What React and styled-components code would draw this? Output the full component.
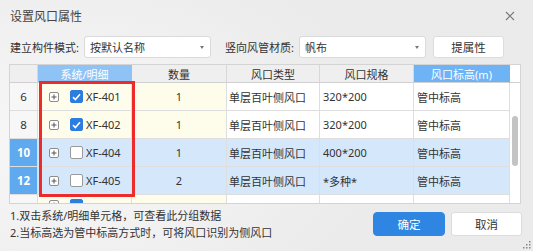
import React from 'react'
import styled, {createGlobalStyle} from 'styled-components'

const GlobalStyle = createGlobalStyle`
    body {
        margin: 0;
        background: #ececec;
        font-family: "Noto Sans", "Noto Sans CJK SC", sans-serif;
    }
`

const Dialog = styled.div`
    position: relative;
    width: 533px;
    height: 251px;
    display: flex;
    flex-direction: column;
    background: radial-gradient(ellipse 420px 260px at 12% 55%, #f8f8f8 0%, #ebebeb 75%);
    color: #333;
    font-size: 11px;
    overflow: hidden;
`

const TitleBar = styled.div`
    display: flex;
    align-items: center;
    justify-content: space-between;
    height: 32px;
    padding: 0 18px 0 10px;
    box-sizing: border-box;
`

const Title = styled.span`
    font-size: 12px;
    color: #444;
`

const FormRow = styled.div`
    display: flex;
    align-items: center;
    height: 22px;
    margin-top: 4px;
    padding-left: 10px;
`

const Label = styled.span`
    margin-right: 5px;
    margin-left: ${({gap}) => gap || 0}px;
    white-space: nowrap;
`

const Select = styled.div`
    display: flex;
    align-items: center;
    justify-content: space-between;
    width: ${({w}) => w}px;
    height: 22px;
    box-sizing: border-box;
    padding: 0 6px 0 5px;
    background: #fff;
    border: 1px solid #dadada;
    border-radius: 3px;
    &::after {
        content: '';
        border-left: 2px solid transparent;
        border-right: 2px solid transparent;
        border-top: 3px solid #777;
    }
`

const Button = styled.div`
    display: flex;
    align-items: center;
    justify-content: center;
    width: ${({w}) => w}px;
    height: ${({h}) => h || 22}px;
    margin-left: ${({gap}) => gap || 0}px;
    box-sizing: border-box;
    border-radius: ${({primary}) => primary ? 4 : 3}px;
    border: 1px solid ${({primary}) => primary ? '#2f86e2' : '#dcdcdc'};
    background: ${({primary}) => primary ? '#2f86e2' : '#fff'};
    color: ${({primary}) => primary ? '#fff' : '#333'};
    font-size: 11.5px;
`

const Table = styled.div`
    position: relative;
    margin: 6px 12px 0 9px;
    border: 1px solid #d4d4d4;
    background: #fff;
`

const COLS = '28px 94px 95px 93px 94px 96px'

const HeaderRow = styled.div`
    display: grid;
    grid-template-columns: ${COLS} 1fr;
    height: 18px;
`

const HeadCell = styled.div`
    display: flex;
    align-items: center;
    justify-content: center;
    box-sizing: border-box;
    border-right: 1px solid ${({blue}) => blue ? 'transparent' : '#d8d8d8'};
    border-bottom: 1px solid #d0d0d0;
    background: ${({blue}) => blue || '#efefef'};
    color: ${({blue}) => blue ? '#fff' : '#333'};
`

const HeadFill = styled.div`
    background: #fff;
    border-bottom: 1px solid #d0d0d0;
`

const Body = styled.div`
    display: flex;
    height: 120px;
`

const Rows = styled.div`
    width: 500px;
    overflow: hidden;
`

const Row = styled.div`
    display: grid;
    grid-template-columns: ${COLS};
    height: 28px;
    flex-shrink: 0;
`

const Cell = styled.div`
    display: flex;
    align-items: ${({top}) => top ? 'flex-start' : 'center'};
    justify-content: ${({center}) => center ? 'center' : 'flex-start'};
    padding-left: ${({pad}) => pad || 0}px;
    padding-top: ${({top}) => top || 0}px;
    box-sizing: border-box;
    border-right: 1px solid #dedede;
    border-bottom: 1px solid #dedede;
    background: ${({sel, cream}) => sel ? '#d5e8fb' : cream ? '#fefcea' : '#fff'};
    white-space: nowrap;
`

const NumCell = styled(Cell)`
    justify-content: center;
    background: ${({sel}) => sel ? '#5fa9ef' : '#f7f7f7'};
    color: ${({sel}) => sel ? '#fff' : '#333'};
    font-weight: ${({sel}) => sel ? 700 : 400};
    font-size: 11.5px;
`

const Expand = styled.span`
    display: flex;
    align-items: center;
    justify-content: center;
    width: 10px;
    height: 10px;
    box-sizing: border-box;
    border: 1px solid #8c8c8c;
    border-radius: 2px;
    background: #fff;
    margin-right: 11px;
    margin-top: ${({top}) => top || 0}px;
`

const Check = styled.span`
    display: flex;
    align-items: center;
    justify-content: center;
    width: 13px;
    height: 13px;
    box-sizing: border-box;
    border-radius: 2px;
    border: 1px solid ${({on}) => on ? '#2b7de0' : '#9a9a9a'};
    background: ${({on}) => on ? '#2b7de0' : '#fff'};
    margin-right: 3px;
`

const Track = styled.div`
    flex: 1;
    display: flex;
    justify-content: center;
    padding-top: 33px;
    background: #fff;
`

const Thumb = styled.div`
    width: 6px;
    height: 50px;
    border-radius: 3px;
    background: #c4c4c4;
`

const Highlight = styled.div`
    position: absolute;
    left: 29px;
    top: 16px;
    width: 96px;
    height: 116px;
    box-sizing: border-box;
    border: 3px solid #ec2b2b;
    pointer-events: none;
`

const Footer = styled.div`
    display: flex;
    align-items: center;
    justify-content: space-between;
    padding: 0 11px 0 10px;
    margin-top: 3px;
`

const Notes = styled.div`
    line-height: 17px;
    font-size: 11px;
`

const Buttons = styled.div`
    display: flex;
`

const Grip = styled.svg`
    position: absolute;
    right: 2px;
    bottom: 2px;
`

const rows = [
    {no: 6, name: 'XF-401', on: true, qty: 1, spec: '320*200'},
    {no: 8, name: 'XF-402', on: true, qty: 1, spec: '320*200'},
    {no: 10, name: 'XF-404', on: false, qty: 1, spec: '400*200', sel: true},
    {no: 12, name: 'XF-405', on: false, qty: 2, spec: '*多种*', sel: true},
]

const PlusIcon = () => (
    <svg width="6" height="6" viewBox="0 0 6 6">
        <path d="M3 0.5 V5.5 M0.5 3 H5.5" stroke="#555" strokeWidth="1" />
    </svg>
)

const CheckMark = () => (
    <svg width="9" height="8" viewBox="0 0 9 8">
        <path d="M1 4.2 L3.4 6.5 L8 1.3" fill="none" stroke="#fff" strokeWidth="1.6" />
    </svg>
)

const App = () => {
    return (
        <Dialog>
            <GlobalStyle />
            <TitleBar>
                <Title>设置风口属性</Title>
                <svg width="10" height="10" viewBox="0 0 10 10">
                    <path d="M1 1 L9 9 M9 1 L1 9" stroke="#777" strokeWidth="1.1" />
                </svg>
            </TitleBar>
            <FormRow>
                <Label>建立构件模式:</Label>
                <Select w={127}>按默认名称</Select>
                <Label gap={14}>竖向风管材质:</Label>
                <Select w={127}>帆布</Select>
                <Button w={71} gap={7}>提属性</Button>
            </FormRow>
            <Table>
                <HeaderRow>
                    <HeadCell />
                    <HeadCell blue="#8fc3f5">系统/明细</HeadCell>
                    <HeadCell>数量</HeadCell>
                    <HeadCell>风口类型</HeadCell>
                    <HeadCell>风口规格</HeadCell>
                    <HeadCell blue="#6db3f5">风口标高(m)</HeadCell>
                    <HeadFill />
                </HeaderRow>
                <Body>
                    <Rows>
                        {rows.map(r => (
                            <Row key={r.no}>
                                <NumCell sel={r.sel}>{r.no}</NumCell>
                                <Cell sel={r.sel} cream pad={11}>
                                    <Expand><PlusIcon /></Expand>
                                    <Check on={r.on}>{r.on ? <CheckMark /> : null}</Check>
                                    {r.name}
                                </Cell>
                                <Cell sel={r.sel} cream center>{r.qty}</Cell>
                                <Cell sel={r.sel} pad={2}>单层百叶侧风口</Cell>
                                <Cell sel={r.sel} pad={3}>{r.spec}</Cell>
                                <Cell sel={r.sel} pad={3}>管中标高</Cell>
                            </Row>
                        ))}
                        {/* next row, scrolled mostly out of view */}
                        <Row>
                            <NumCell />
                            <Cell cream pad={11} top={4}>
                                <Expand top={1}><PlusIcon /></Expand>
                                <Check on><CheckMark /></Check>
                            </Cell>
                            <Cell cream />
                            <Cell />
                            <Cell />
                            <Cell />
                        </Row>
                    </Rows>
                    <Track>
                        <Thumb />
                    </Track>
                </Body>
                <Highlight />
            </Table>
            <Footer>
                <Notes>
                    <div>1.双击系统/明细单元格，可查看此分组数据</div>
                    <div>2.当标高选为管中标高方式时，可将风口识别为侧风口</div>
                </Notes>
                <Buttons>
                    <Button primary w={72} h={24}>确定</Button>
                    <Button w={71} h={24} gap={6}>取消</Button>
                </Buttons>
            </Footer>
            <Grip width="8" height="8" viewBox="0 0 8 8">
                <rect x="6" y="0" width="1.5" height="1.5" fill="#888" />
                <rect x="3" y="3" width="1.5" height="1.5" fill="#888" />
                <rect x="6" y="3" width="1.5" height="1.5" fill="#888" />
                <rect x="0" y="6" width="1.5" height="1.5" fill="#888" />
                <rect x="3" y="6" width="1.5" height="1.5" fill="#888" />
                <rect x="6" y="6" width="1.5" height="1.5" fill="#888" />
            </Grip>
        </Dialog>
    )
}

export default App
